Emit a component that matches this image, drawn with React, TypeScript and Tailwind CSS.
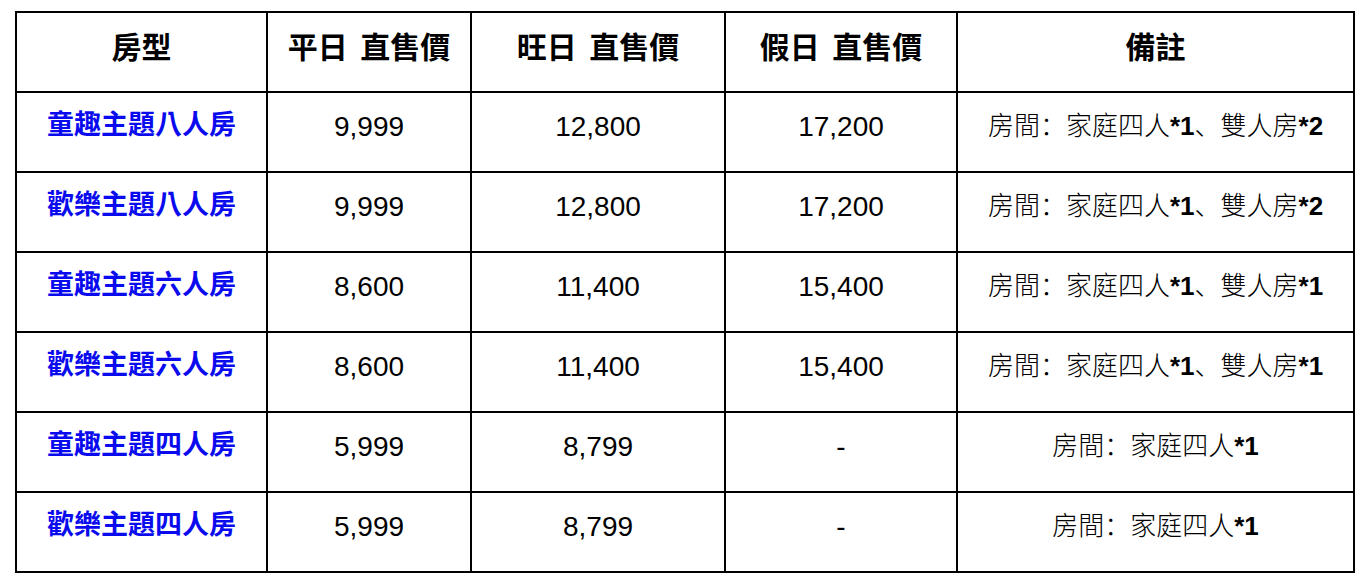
const ROWS = [
  { name: "童趣主題八人房", weekday: "9,999", peak: "12,800", holiday: "17,200", note: ["房間：家庭四人", "*1", "、雙人房", "*2"] },
  { name: "歡樂主題八人房", weekday: "9,999", peak: "12,800", holiday: "17,200", note: ["房間：家庭四人", "*1", "、雙人房", "*2"] },
  { name: "童趣主題六人房", weekday: "8,600", peak: "11,400", holiday: "15,400", note: ["房間：家庭四人", "*1", "、雙人房", "*1"] },
  { name: "歡樂主題六人房", weekday: "8,600", peak: "11,400", holiday: "15,400", note: ["房間：家庭四人", "*1", "、雙人房", "*1"] },
  { name: "童趣主題四人房", weekday: "5,999", peak: "8,799", holiday: "-", note: ["房間：家庭四人", "*1"] },
  { name: "歡樂主題四人房", weekday: "5,999", peak: "8,799", holiday: "-", note: ["房間：家庭四人", "*1"] },
];

const HEADERS = ["房型", "平日 直售價", "旺日 直售價", "假日 直售價", "備註"];

const cjk = "font-['Liberation_Sans','Noto_Sans_CJK_TC',sans-serif]";
const cell = "border-2 border-black text-center align-middle";

export default function App() {
  return (
    <div className={`min-h-[588px] bg-white pl-[15px] pt-[11px] text-black ${cjk}`}>
      <table className="w-[1338px] table-fixed border-collapse border-2 border-black">
        <colgroup>
          <col className="w-[251px]" />
          <col className="w-[204px]" />
          <col className="w-[254px]" />
          <col className="w-[232px]" />
          <col className="w-[397px]" />
        </colgroup>
        <thead>
          <tr className="h-[80px]">
            {HEADERS.map((h) => (
              <th key={h} className={`${cell} pb-[10px] text-[30px] font-bold [word-spacing:4px]`}>
                {h}
              </th>
            ))}
          </tr>
        </thead>
        <tbody>
          {ROWS.map((r) => (
            <tr key={r.name} className="h-[80px]">
              <td className={`${cell} pb-[14px] text-[27px] font-bold text-[#0a0aee]`}>{r.name}</td>
              <td className={`${cell} pb-[10px] text-[28px]`}>{r.weekday}</td>
              <td className={`${cell} pb-[10px] text-[28px]`}>{r.peak}</td>
              <td className={`${cell} pb-[10px] text-[28px]`}>{r.holiday}</td>
              <td className={`${cell} pb-[12px] font-['Liberation_Sans','Noto_Sans_CJK_SC',sans-serif] text-[26px] font-light`}>
                {r.note.map((t, i) =>
                  t.startsWith("*") ? (
                    <span key={i} className="font-bold">{t}</span>
                  ) : (
                    <span key={i}>{t}</span>
                  )
                )}
              </td>
            </tr>
          ))}
        </tbody>
      </table>
    </div>
  );
}
